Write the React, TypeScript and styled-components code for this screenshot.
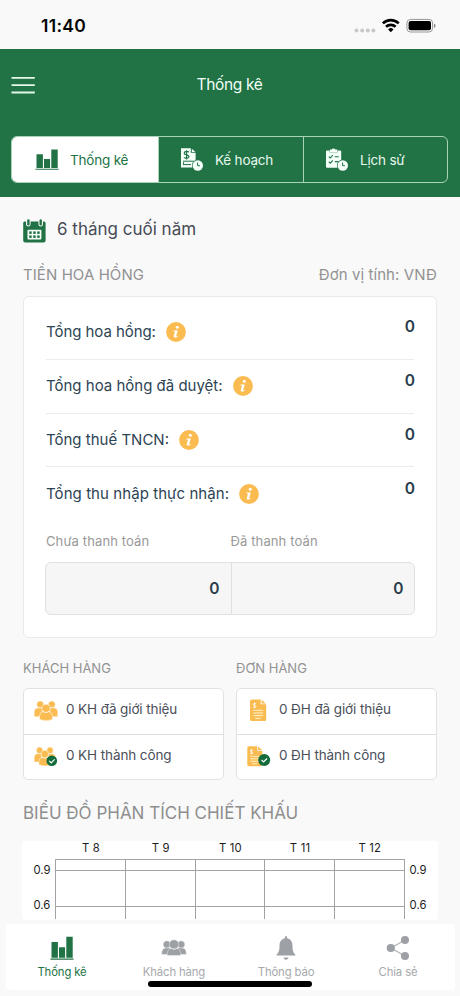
import React from 'react';
import styled, { createGlobalStyle } from 'styled-components';

const green = '#217346';
const amber = '#fabb50';

const GlobalStyle = createGlobalStyle`
  * { box-sizing: border-box; }
  html, body { margin: 0; padding: 0; background: #f9f9f9; }
  body { font-family: Inter, Roboto, sans-serif; -webkit-font-smoothing: antialiased; }
  svg { display: block; flex: none; }
`;

const Screen = styled.div`
  width: 460px;
  height: 996px;
  overflow: hidden;
  display: flex;
  flex-direction: column;
  background: #f9f9f9;
`;

const StatusBar = styled.div`
  height: 49px;
  flex: none;
  display: flex;
  align-items: center;
  justify-content: space-between;
  padding: 2px 24px 0 41px;
`;

const Clock = styled.span`
  font-size: 17.5px;
  font-weight: 600;
  line-height: 20px;
  letter-spacing: 0.3px;
  color: #050505;
`;

const Header = styled.header`
  height: 148px;
  flex: none;
  background: ${green};
  display: flex;
  flex-direction: column;
  padding: 0 12px 0 11px;
`;

const TitleRow = styled.div`
  height: 72px;
  flex: none;
  display: grid;
  grid-template-columns: 24px 1fr 24px;
  align-items: center;
  margin-bottom: 15px;
`;

const Title = styled.h1`
  margin: 0;
  text-align: center;
  font-size: 15.5px;
  font-weight: 400;
  line-height: 20px;
  letter-spacing: -0.35px;
  color: #f2fff6;
`;

const Segments = styled.div`
  height: 47px;
  display: grid;
  grid-template-columns: 146px 145px 1fr;
  border: 1px solid #a9d3b8;
  border-radius: 6px;
  overflow: hidden;
`;

const Segment = styled.button<{ $active?: boolean }>`
  border: 0;
  border-left: ${(p) => (p.$active ? '0' : '1px solid #a9d3b8')};
  padding: 0 0 0 ${(p) => (p.$active ? '23px' : '21px')};
  display: flex;
  align-items: center;
  gap: 11px;
  font: 400 13.5px/20px Inter, sans-serif;
  letter-spacing: -0.2px;
  background: ${(p) => (p.$active ? '#fff' : 'transparent')};
  color: ${(p) => (p.$active ? green : '#e8f8ed')};
`;

const Content = styled.main`
  height: 723px;
  flex: none;
  padding: 22px 23px 0;
  display: flex;
  flex-direction: column;
  overflow: hidden;
`;

const Period = styled.div`
  display: flex;
  align-items: center;
  gap: 11px;
  height: 24px;
`;

const PeriodText = styled.span`
  font-size: 17px;
  line-height: 24px;
  color: #474b55;
  margin-top: -4px;
`;

const SectionHead = styled.div`
  display: flex;
  justify-content: space-between;
  height: 20px;
  margin-top: 22px;
  font-size: 15px;
  line-height: 20px;
  letter-spacing: 0.08px;
  color: #929292;
`;

const Card = styled.section`
  flex: none;
  height: 342px;
  margin-top: 11px;
  padding: 9px 22px 0;
  background: #fff;
  border: 1px solid #e9e9e9;
  border-radius: 6px;
`;

const AmountRow = styled.div<{ $last?: boolean }>`
  display: flex;
  height: 53.8px;
  align-items: center;
  border-bottom: 1px solid ${(p) => (p.$last ? 'transparent' : '#ececec')};
  color: #2d4454;
`;

const AmountLabel = styled.span<{ $tracking: number }>`
  font-size: 15px;
  line-height: 20px;
  letter-spacing: ${(p) => p.$tracking}px;
  margin-right: 10px;
`;

const AmountValue = styled.span`
  margin: -10px -1px 0 auto;
  font-size: 15.5px;
  font-weight: 600;
  line-height: 20px;
  color: #2a3c4b;
`;

const PaidLabels = styled.div`
  display: grid;
  grid-template-columns: 184.5px 1fr;
  height: 18px;
  margin-top: 11px;
  font-size: 13px;
  line-height: 18px;
  letter-spacing: 0.12px;
  color: #999;
`;

const PaidBoxes = styled.div`
  margin: 12px -1px 0;
  height: 53px;
  display: grid;
  grid-template-columns: 185px 1fr;
  border: 1px solid #e0e0e0;
  border-radius: 6px;
  background: #f6f6f6;
`;

const PaidBox = styled.div`
  display: flex;
  align-items: center;
  justify-content: flex-end;
  padding-right: 11.5px;
  font-size: 15.5px;
  font-weight: 600;
  color: #2a3c4b;
  & + & { border-left: 1px solid #e0e0e0; padding-right: 10.5px; }
`;

const Stats = styled.div`
  flex: none;
  display: grid;
  grid-template-columns: 201px 201px;
  gap: 12px;
  margin-top: 21px;
`;

const StatTitle = styled.h2`
  margin: 0 0 10px;
  height: 19px;
  font-size: 13px;
  font-weight: 400;
  line-height: 19px;
  color: #929292;
`;

const StatBox = styled.div`
  height: 92px;
  border: 1px solid #e2e2e2;
  border-radius: 5px;
  background: #fff;
  display: grid;
  grid-template-rows: 44.5px 1fr;
`;

const StatRow = styled.div`
  display: flex;
  align-items: center;
  gap: 8px;
  padding-left: 10px;
  font-size: 13.5px;
  line-height: 18px;
  letter-spacing: -0.1px;
  color: #4b4f5a;
  & + & { border-top: 1px solid #dedede; }
  span { margin-top: -4px; }
`;

const ChartTitle = styled.h2`
  flex: none;
  margin: 21px 0 0;
  height: 24px;
  font-size: 17px;
  font-weight: 400;
  line-height: 24px;
  color: #8e8e8e;
`;

const ChartPanel = styled.div`
  flex: none;
  margin: 16px -1px 0;
  height: 79px;
  background: #fff;
  border-radius: 4px;
  overflow: hidden;
`;

const TabBar = styled.nav`
  flex: none;
  margin: 4px 5px 0 6px;
  height: 66px;
  border-radius: 4px;
  background: #fff;
  display: grid;
  grid-template-columns: repeat(4, 112px);
  position: relative;
`;

const Tab = styled.div<{ $active?: boolean }>`
  display: flex;
  flex-direction: column;
  align-items: center;
  padding-top: 12px;
  gap: 4px;
  font-size: 11.3px;
  line-height: 16px;
  letter-spacing: -0.12px;
  color: ${(p) => (p.$active ? green : '#a6a9ad')};
`;

const HomeIndicator = styled.div`
  position: absolute;
  left: 142px;
  bottom: 3px;
  width: 164px;
  height: 6px;
  border-radius: 3px;
  background: #000;
`;

const StatusIcons = () => (
  <svg width="83" height="16" viewBox="353 17.5 83 16">
    <g fill="#c8c8c8">
      <circle cx="356.5" cy="30" r="2" /><circle cx="362.2" cy="30" r="2" />
      <circle cx="367.8" cy="30" r="2" /><circle cx="373.4" cy="30" r="2" />
    </g>
    <g fill="none" stroke="#000" strokeWidth="2.6">
      <path d="M382.9 22.9a11.1 11.1 0 0 1 15.8 0" />
      <path d="M386 26.3a6.9 6.9 0 0 1 9.6 0" />
    </g>
    <path d="M390.8 31.7l-2.7-2.8a3.9 3.9 0 0 1 5.4 0z" />
    <rect x="406.9" y="18.9" width="25.7" height="12.6" rx="3.6" fill="none" stroke="#989898" />
    <rect x="408.6" y="20.6" width="22.4" height="9.2" rx="2" />
    <path d="M434 23.2c2 .6 2 3.6 0 4.2z" fill="#888" />
  </svg>
);

const MenuIcon = () => (
  <svg width="24" height="18" viewBox="0 0 24 18" stroke="#e4f8ea" strokeWidth="1.8">
    <path d="M.5 1.9h23.3M.5 9.2h23.3M.5 16.5h23.3" />
  </svg>
);

const BarsIcon = ({ h = 21 }: { h?: number }) => (
  <svg width="24" height={h} viewBox="0 0 24 22" preserveAspectRatio="none" fill={green}>
    <path d="M1.5 5.6h6.4v14.3H1.5zM9 10.4h6.1v9.5H9zM16.3.6h6.4v19.3h-6.4zM.4 20.6h23.2v1.2H.4z" />
  </svg>
);

const PlanClock = () => (
  <>
    <circle cx="17.8" cy="17.5" r="5.9" fill={green} />
    <circle cx="17.8" cy="17.5" r="5.2" fill="#f4fff7" />
    <path d="M17.6 14.5v3.2h2.3" fill="none" stroke={green} strokeWidth="1" />
  </>
);

const PlanIcon = () => (
  <svg width="24" height="24" viewBox="0 0 24 24">
    <path d="M1 .3h9.8v4.5h4.8v14.8H1zM11.8.7l3.6 3.4h-3.6z" fill="#f4fff7" />
    <path d="M9 4.2C7.8 3 4.2 3 4.2 5.2c0 2.3 4.8 1.1 4.8 3.4 0 2-3.7 2.2-5 .8M6.6 2.3v9.2" fill="none" stroke={green} strokeWidth="1.2" />
    <path d="M3 13.2h10.8M3 16.6h8" stroke={green} strokeWidth="1" />
    <path d="M3 14.2h1v2H3z" fill={green} />
    <PlanClock />
  </svg>
);

const HistoryIcon = () => (
  <svg width="24" height="24" viewBox="0 0 24 24">
    <path d="M2 2.4h2.7v2.2h7.8V2.4h2.7q1 0 1 1v15.4q0 1-1 1H2q-1 0-1-1V3.4q0-1 1-1z" fill="#f4fff7" />
    <path d="M5 1.6h1.9Q7.1.4 8.6.4t1.7 1.2h2v3H5z" fill="#f4fff7" />
    <path d="M3.8 8.6l1.5 1.4 2.5-2.8M3.8 13.7l1.5 1.4 2.5-2.8M9.8 8.7h3.9M9.8 13.6h3.4" fill="none" stroke={green} strokeWidth="1.1" />
    <PlanClock />
  </svg>
);

const CalendarIcon = () => (
  <svg width="23" height="24" viewBox="0 0 23 24">
    <path d="M1.500 2.500H3v2.700a2.300 2.300 0 0 0 4.600 0V2.500h7.800v2.700a2.300 2.300 0 0 0 4.600 0V2.500h1q1.600 0 1.600 1.600v17.400q0 2-2 2H2.200q-2 0-2-2V4q0-1.500 1.300-1.500z" fill={green} />
    <rect x="4.200" y=".2" width="2.400" height="6.300" rx="1.200" fill={green} />
    <rect x="16.500" y=".2" width="2.400" height="6.300" rx="1.200" fill={green} />
    <rect x="4.500" y="10.800" width="13.900" height="9.800" rx="1" fill="#f8fff9" />
    <g fill={green}>
      <rect x="6.200" y="12.400" width="2.500" height="2.500" /><rect x="10.200" y="12.400" width="2.500" height="2.500" /><rect x="14.200" y="12.400" width="2.500" height="2.500" />
      <rect x="6.200" y="16.400" width="2.500" height="2.500" /><rect x="10.200" y="16.400" width="2.500" height="2.500" /><rect x="14.200" y="16.400" width="2.500" height="2.500" />
    </g>
  </svg>
);

const InfoIcon = () => (
  <svg width="20" height="20" viewBox="0 0 20 20">
    <circle cx="10" cy="10" r="9.9" fill={amber} />
    <circle cx="11.3" cy="5.3" r="1.5" fill="#fff" />
    <path d="M7.500 8.400h4.300l-1.600 5.500q-.2.900 1.500.1l-.2.900c-1.800 1.100-4.300 1.100-3.700-1.200l1.200-4.200H7.400z" fill="#fff" />
  </svg>
);

const DoneBadge = ({ cx, cy, r }: { cx: number; cy: number; r: number }) => (
  <>
    <circle cx={cx} cy={cy} r={r} fill="#126c3c" />
    <path d={`M${cx - 2.6} ${cy}l2 2 3.400-3.500`} fill="none" stroke="#fff" strokeWidth="1.2" />
  </>
);

const GoldPeople = ({ done }: { done?: boolean }) => (
  <svg width="24" height="22" viewBox="0 0 24 22">
    <g fill={amber} stroke="#fff" strokeWidth=".5" transform={done ? 'translate(0 .6) scale(.9 .95)' : 'translate(0 .4)'}>
      <circle cx="6.200" cy="4" r="3.500" /><circle cx="17.800" cy="4" r="3.500" />
      <path d="M.2 16.300V11.500q0-4 3.700-4h4.300v8.800zM23.800 16.300V11.500q0-4-3.700-4h-4.300v8.800z" />
      <circle cx="12" cy="7.900" r="4.100" />
      <path d="M5.500 19v-3.400q0-4 4-4.200 2.500 1.800 5 0 4 .2 4 4.200V19q-6 2.800-13 0z" />
    </g>
    {done && <DoneBadge cx={17.800} cy={14.800} r={5.300} />}
  </svg>
);

const Invoice = ({ done }: { done?: boolean }) => (
  <svg width="24" height="24" viewBox="0 0 24 24">
    <g transform={done ? 'translate(-2.500 .8) scale(.93)' : undefined}>
      <path d="M5.500.5h8.200v4.800h5.500v15.200q0 1.500-1.500 1.500H4.500Q3 22 3 20.500V2Q3 .5 5.500.5zM14.600.8l4.300 3.800h-4.300z" fill={amber} />
      <path d="M9 4.800C7.500 4 6 4.600 6.300 5.700c.3.900 2.600.6 2.600 1.800 0 1.100-1.600 1.300-2.900.6M7.600 3.600v5.400" fill="none" stroke="#fff" strokeWidth=".8" />
      <path d="M6.200 11.300h9.900M6.200 14h9.900M6.200 16.600h9.900M8.200 19.300h5.500" stroke="#fff3cf" strokeWidth="1" />
    </g>
    {done && <DoneBadge cx={17.200} cy={15} r={6} />}
  </svg>
);

const TabPeople = () => (
  <svg width="26" height="24" viewBox="0 0 26 24" fill="#9da0a5" stroke="#fff" strokeWidth=".4">
    <circle cx="5.900" cy="8.500" r="3.700" /><circle cx="20.100" cy="8.500" r="3.700" />
    <path d="M.6 18.400q0-6.200 4-6.400h5v6.400zM25.400 18.400q0-6.200-4-6.400h-5v6.400z" />
    <circle cx="13" cy="8.400" r="4.700" />
    <path d="M6.200 19.500q0-6.800 4-7.100 2.800 2 5.600 0 4 .3 4 7.100z" />
  </svg>
);

const BellIcon = () => (
  <svg width="20" height="24" viewBox="0 0 20 24" fill="#9da0a5">
    <path d="M10 0q1.200 0 1.200 2.200c3.700.9 5.300 4 5.300 7.200 0 4.800.6 6.800 3 9.300v.8H.5v-.8c2.400-2.500 3-4.500 3-9.300 0-3.200 1.600-6.300 5.300-7.200Q8.800 0 10 0zM7.400 21.400h5.200q-.8 2.400-2.600 2.400t-2.600-2.400z" />
  </svg>
);

const ShareIcon = () => (
  <svg width="24" height="24" viewBox="0 0 24 24" fill="#9da0a5">
    <path d="M19 4L5 12l14 8" fill="none" stroke="#b2b4b8" strokeWidth="1.2" />
    <circle cx="19" cy="4" r="4" /><circle cx="4.800" cy="12" r="4.100" /><circle cx="19" cy="20" r="4" />
  </svg>
);

const Chart = () => (
  <svg width="416" height="79" viewBox="22 841 416 79">
    <path
      fill="none"
      stroke="#a3a3a3"
      shapeRendering="crispEdges"
      d="M55.500 859V919M125.500 859V919M195.500 859V919M264.500 859V919M334.500 859V919M404.500 859V919M55.500 859.500H404.500M55.500 870.500H404.500M55.500 906.500H404.500"
    />
    <g fontFamily="Inter, sans-serif" fontSize="11.3" fill="#1c1c1c" textAnchor="middle">
      {['T 8', 'T 9', 'T 10', 'T 11', 'T 12'].map((t, i) => (
        <text key={t} x={91 + i * 69.7} y="852.300" letterSpacing=".2">{t}</text>
      ))}
      <text x="41.900" y="873.800">0.9</text><text x="41.900" y="909.300">0.6</text>
      <text x="418" y="873.800">0.9</text><text x="418" y="909.300">0.6</text>
    </g>
  </svg>
);

const amounts = [
  { label: 'Tổng hoa hồng:', tracking: -0.06 },
  { label: 'Tổng hoa hồng đã duyệt:', tracking: 0 },
  { label: 'Tổng thuế TNCN:', tracking: 0 },
  { label: 'Tổng thu nhập thực nhận:', tracking: 0.07 },
];

export default function App() {
  return (
    <Screen>
      <GlobalStyle />
      <StatusBar><Clock>11:40</Clock><StatusIcons /></StatusBar>
      <Header>
        <TitleRow><MenuIcon /><Title>Thống kê</Title></TitleRow>
        <Segments>
          <Segment $active><BarsIcon /><span>Thống kê</span></Segment>
          <Segment><PlanIcon /><span>Kế hoạch</span></Segment>
          <Segment><HistoryIcon /><span>Lịch sử</span></Segment>
        </Segments>
      </Header>
      <Content>
        <Period><CalendarIcon /><PeriodText>6 tháng cuối năm</PeriodText></Period>
        <SectionHead>
          <span>TIỀN HOA HỒNG</span>
          <span>Đơn vị tính: VNĐ</span>
        </SectionHead>
        <Card>
          {amounts.map(({ label, tracking }, i) => (
            <AmountRow key={label} $last={i === amounts.length - 1}>
              <AmountLabel $tracking={tracking}>{label}</AmountLabel>
              <InfoIcon />
              <AmountValue>0</AmountValue>
            </AmountRow>
          ))}
          <PaidLabels><span>Chưa thanh toán</span><span>Đã thanh toán</span></PaidLabels>
          <PaidBoxes><PaidBox>0</PaidBox><PaidBox>0</PaidBox></PaidBoxes>
        </Card>
        <Stats>
          <div>
            <StatTitle>KHÁCH HÀNG</StatTitle>
            <StatBox>
              <StatRow><GoldPeople /><span>0 KH đã giới thiệu</span></StatRow>
              <StatRow><GoldPeople done /><span>0 KH thành công</span></StatRow>
            </StatBox>
          </div>
          <div>
            <StatTitle>ĐƠN HÀNG</StatTitle>
            <StatBox>
              <StatRow><Invoice /><span>0 ĐH đã giới thiệu</span></StatRow>
              <StatRow><Invoice done /><span>0 ĐH thành công</span></StatRow>
            </StatBox>
          </div>
        </Stats>
        <ChartTitle>BIỂU ĐỒ PHÂN TÍCH CHIẾT KHẤU</ChartTitle>
        <ChartPanel><Chart /></ChartPanel>
      </Content>
      <TabBar>
        <Tab $active><BarsIcon h={24} />Thống kê</Tab>
        <Tab><TabPeople />Khách hàng</Tab>
        <Tab><BellIcon />Thông báo</Tab>
        <Tab><ShareIcon />Chia sẻ</Tab>
        <HomeIndicator />
      </TabBar>
    </Screen>
  );
}
